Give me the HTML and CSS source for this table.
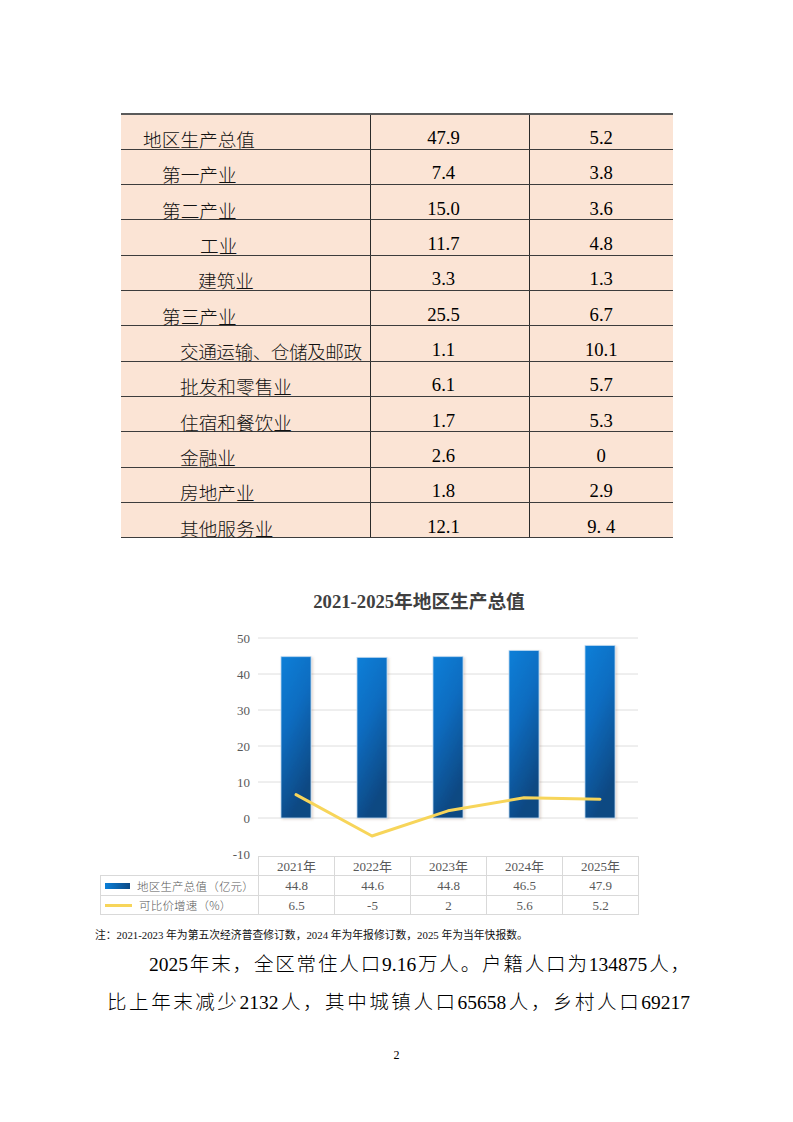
FILE: index.html
```html
<!DOCTYPE html>
<html lang="zh-CN">
<head>
<meta charset="utf-8">
<title>地区生产总值</title>
<link rel="stylesheet" href="styles.css">
</head>
<body>
<div class="page">
  <table class="gdp">
    <colgroup><col class="c1"><col class="c2"><col class="c3"></colgroup>
    <tbody>
      <tr class="first"><td class="name l0">地区生产总值</td><td class="v2">47.9</td><td class="v3">5.2</td></tr>
      <tr><td class="name l1">第一产业</td><td class="v2">7.4</td><td class="v3">3.8</td></tr>
      <tr><td class="name l1">第二产业</td><td class="v2">15.0</td><td class="v3">3.6</td></tr>
      <tr><td class="name l2">工业</td><td class="v2">11.7</td><td class="v3">4.8</td></tr>
      <tr><td class="name l2b">建筑业</td><td class="v2">3.3</td><td class="v3">1.3</td></tr>
      <tr><td class="name l1">第三产业</td><td class="v2">25.5</td><td class="v3">6.7</td></tr>
      <tr><td class="name l3 wide">交通运输、仓储及邮政</td><td class="v2">1.1</td><td class="v3">10.1</td></tr>
      <tr><td class="name l3">批发和零售业</td><td class="v2">6.1</td><td class="v3">5.7</td></tr>
      <tr><td class="name l3">住宿和餐饮业</td><td class="v2">1.7</td><td class="v3">5.3</td></tr>
      <tr><td class="name l3">金融业</td><td class="v2">2.6</td><td class="v3">0</td></tr>
      <tr><td class="name l3">房地产业</td><td class="v2">1.8</td><td class="v3">2.9</td></tr>
      <tr><td class="name l3">其他服务业</td><td class="v2">12.1</td><td class="v3">9. 4</td></tr>
    </tbody>
  </table>

  <div class="chart">
    <div class="chart-title">2021-2025年地区生产总值</div>
    <svg class="plot" width="538" height="235" viewBox="0 0 538 235">
      <defs>
        <linearGradient id="barGrad" x1="0" y1="0" x2="0.35" y2="1">
          <stop offset="0" stop-color="#0a7fd8"/>
          <stop offset="0.45" stop-color="#0a6cc0"/>
          <stop offset="1" stop-color="#0c4882"/>
        </linearGradient>
        <filter id="shadow" x="-20%" y="-5%" width="150%" height="115%">
          <feDropShadow dx="1.5" dy="1" stdDeviation="1" flood-color="#8a5a3a" flood-opacity="0.25"/>
        </filter>
      </defs>
      <g class="grid">
        <line x1="158" y1="17" x2="538" y2="17"/>
        <line x1="158" y1="53" x2="538" y2="53"/>
        <line x1="158" y1="89" x2="538" y2="89"/>
        <line x1="158" y1="125" x2="538" y2="125"/>
        <line x1="158" y1="161" x2="538" y2="161"/>
        <line x1="158" y1="197" x2="538" y2="197"/>
      </g>
      <g class="ylab">
        <text x="150" y="17">50</text>
        <text x="150" y="53">40</text>
        <text x="150" y="89">30</text>
        <text x="150" y="125">20</text>
        <text x="150" y="161">10</text>
        <text x="150" y="197">0</text>
        <text x="150" y="233">-10</text>
      </g>
      <g class="bars" filter="url(#shadow)">
        <rect x="181" y="35.7" width="30" height="161.3"/>
        <rect x="257" y="36.4" width="30" height="160.6"/>
        <rect x="333" y="35.7" width="30" height="161.3"/>
        <rect x="409" y="29.6" width="30" height="167.4"/>
        <rect x="485" y="24.6" width="30" height="172.4"/>
      </g>
      <polyline class="growth" points="196,173.6 272,215 348,189.8 424,176.8 500,178.3"/>
    </svg>
    <table class="data">
      <colgroup><col class="d1"><col class="dn"><col class="dn"><col class="dn"><col class="dn"><col class="dn"></colgroup>
      <tr class="hdr"><td class="blank"></td><td>2021年</td><td>2022年</td><td>2023年</td><td>2024年</td><td>2025年</td></tr>
      <tr><td class="legend"><span class="key-bar"></span><span class="lbl">地区生产总值（亿元）</span></td><td>44.8</td><td>44.6</td><td>44.8</td><td>46.5</td><td>47.9</td></tr>
      <tr><td class="legend"><span class="key-line"></span><span class="lbl">可比价增速（%）</span></td><td>6.5</td><td>-5</td><td>2</td><td>5.6</td><td>5.2</td></tr>
    </table>
  </div>

  <p class="note">注：2021-2023 年为第五次经济普查修订数，2024 年为年报修订数，2025 年为当年快报数。</p>

  <div class="para">
    <span class="line first">2025年末，全区常住人口9.16万人。户籍人口为134875人，</span>
    <span class="line">比上年末减少2132人，其中城镇人口65658人，乡村人口69217</span>
  </div>

  <div class="pageno">2</div>
</div>
</body>
</html>
```

FILE: styles.css
```css
html, body {
  margin: 0;
  padding: 0;
  background: #ffffff;
}

body {
  font-family: "Liberation Serif", "Noto Sans CJK SC", serif;
  color: #000;
}

.page {
  width: 793px;
  padding-top: 113px;
}

/* ---------- main table ---------- */
.gdp {
  margin-left: 121px;
  width: 552px;
  border-collapse: collapse;
  table-layout: fixed;
  background: #fbe4d5;
  font-size: 18.67px;
}

.gdp col.c1 { width: 249px; }
.gdp col.c2 { width: 159px; }
.gdp col.c3 { width: 144px; }

.gdp tr {
  height: 35.33px;
}

.gdp td {
  padding: 0 0 1px 0;
  line-height: 1;
  vertical-align: bottom;
  border-bottom: 1px solid #3c3c3c;
  white-space: nowrap;
}

.gdp tr.first td {
  border-top: 2px solid #5a5a5a;
}

.gdp td.v2 {
  text-align: center;
  padding-right: 12px;
  border-left: 1px solid #2a2a2a;
  border-right: 1px solid #2a2a2a;
}

.gdp td.v3 {
  text-align: center;
}

.gdp td.name {
  font-family: "Noto Sans CJK SC", sans-serif;
  font-weight: 300;
  color: #111;
  padding-bottom: 0;
}

.gdp td.l0 { padding-left: 22px; }
.gdp td.l1 { padding-left: 41px; }
.gdp td.l2 { padding-left: 79px; }
.gdp td.l2b { padding-left: 77px; }
.gdp td.l3 { padding-left: 59px; }
.gdp td.wide { letter-spacing: -0.5px; }

/* ---------- chart ---------- */
.chart {
  margin-top: 52px;
}

.chart-title {
  margin-left: 100px;
  width: 638px;
  text-align: center;
  font-size: 18.67px;
  line-height: 24px;
  font-weight: bold;
  color: #404040;
}

.plot {
  display: block;
  margin-left: 100px;
  margin-top: 7px;
  overflow: visible;
}

.plot .grid line {
  stroke: #dedede;
  stroke-width: 1;
}

.plot .ylab text {
  font-family: "Liberation Serif", serif;
  font-size: 13px;
  fill: #595959;
  text-anchor: end;
  dominant-baseline: central;
}

.plot .bars rect {
  fill: url(#barGrad);
  stroke: #b9d6f0;
  stroke-width: 0.8;
}

.plot .growth {
  fill: none;
  stroke: #f7d55a;
  stroke-width: 3;
  stroke-linejoin: round;
  stroke-linecap: round;
}

.data {
  margin-left: 100px;
  width: 538px;
  border-collapse: collapse;
  table-layout: fixed;
  font-size: 13px;
  color: #595959;
}

.data col.d1 { width: 158px; }
.data col.dn { width: 76px; }

.data td {
  border: 1px solid #d9d9d9;
  text-align: center;
  padding: 0;
  height: 17px;
  line-height: 17px;
  white-space: nowrap;
}

.data tr.hdr td {
  height: 18px;
}

.data td.blank {
  border-top: none;
  border-left: none;
}

.data td.legend {
  text-align: left;
  padding-left: 4px;
}

.key-bar {
  display: inline-block;
  width: 25px;
  height: 6px;
  vertical-align: middle;
  background: linear-gradient(90deg, #0a7fd8, #0c4a86);
}

.key-line {
  display: inline-block;
  width: 27px;
  height: 3px;
  vertical-align: middle;
  background: #f7d55a;
}

.lbl {
  margin-left: 7px;
  font-family: "Noto Sans CJK SC", sans-serif;
  font-weight: 300;
  font-size: 11.5px;
  letter-spacing: 0.2px;
  vertical-align: middle;
}

/* ---------- note & paragraph ---------- */
.note {
  margin: 13px 0 0 95px;
  font-size: 10.8px;
  line-height: 14px;
  color: #111;
}

.para {
  margin: 4px 0 0 107px;
  width: 583px;
  font-family: "Liberation Serif", "Noto Sans CJK SC", serif;
  font-size: 19.5px;
  font-weight: 300;
  line-height: 38px;
}

.para .line {
  display: block;
  text-align: justify;
  text-align-last: justify;
}

.para .line.first {
  padding-left: 42px;
}

.pageno {
  margin-top: 25px;
  text-align: center;
  font-size: 12px;
  line-height: 16px;
}
```
